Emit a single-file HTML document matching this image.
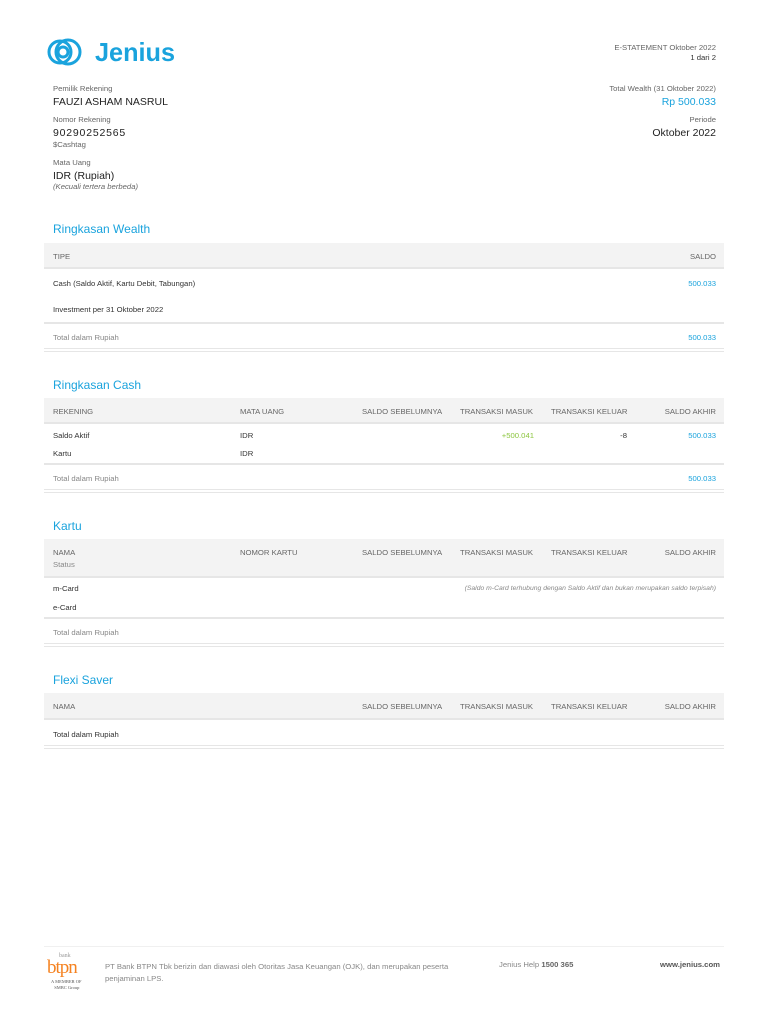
<!DOCTYPE html>
<html><head><meta charset="utf-8"><style>
body{margin:0;width:768px;height:1024px;background:#fff;position:relative;font-family:"Liberation Sans",sans-serif;color:#333;overflow:hidden}
.t{position:absolute;white-space:nowrap;line-height:1;transform:translateY(2px)}
.s{font-size:7.7px;color:#666}
.g{color:#888}
.v{font-size:10.5px;color:#222}
.b{color:#1aa3dd}
.h{font-size:12px;color:#1aa3dd}
.hd{position:absolute;left:44px;width:680px;background:#f3f3f3;border-bottom:2px solid #e6e6e6}
.ln{position:absolute;left:44px;width:680px;height:2px;background:#e6e6e6}
.r{text-align:right}
</style></head><body>
<svg style="position:absolute;left:46px;top:36px" width="135" height="32" viewBox="0 0 135 32">
<g fill="none" stroke="#1aa3dd" stroke-width="3"><circle cx="14" cy="16" r="11"/><circle cx="22" cy="16" r="12"/><circle cx="17" cy="16" r="5"/></g>
<text x="49" y="25" font-family="Liberation Sans,sans-serif" font-size="26" font-weight="bold" fill="#1aa3dd" textLength="80" lengthAdjust="spacingAndGlyphs">Jenius</text>
</svg>
<div class="t s" style="left:53px;top:83px">Pemilik Rekening</div>
<div class="t v" style="left:53px;top:95px">FAUZI ASHAM NASRUL</div>
<div class="t s" style="left:53px;top:114px">Nomor Rekening</div>
<div class="t v" style="left:53px;top:126px;letter-spacing:.8px">90290252565</div>
<div class="t s" style="left:53px;top:139px">$Cashtag</div>
<div class="t s" style="left:53px;top:157px">Mata Uang</div>
<div class="t v" style="left:53px;top:169px">IDR (Rupiah)</div>
<div class="t s" style="left:53px;top:181px;font-style:italic">(Kecuali tertera berbeda)</div>
<div class="t s r" style="right:52px;top:42px">E-STATEMENT Oktober 2022</div>
<div class="t s r" style="right:52px;top:52px;color:#333">1 dari 2</div>
<div class="t s r" style="right:52px;top:83px">Total Wealth (31 Oktober 2022)</div>
<div class="t r b" style="right:52px;top:95px;font-size:10.5px">Rp 500.033</div>
<div class="t s r" style="right:52px;top:114px">Periode</div>
<div class="t v r" style="right:52px;top:126px">Oktober 2022</div>

<div class="t h" style="left:53px;top:221px">Ringkasan Wealth</div>
<div class="hd" style="top:243px;height:24px"></div>
<div class="t s" style="left:53px;top:251px">TIPE</div>
<div class="t s r" style="right:52px;top:251px">SALDO</div>
<div class="t s" style="left:53px;top:278px;color:#333">Cash (Saldo Aktif, Kartu Debit, Tabungan)</div>
<div class="t s r b" style="right:52px;top:278px">500.033</div>
<div class="t s" style="left:53px;top:304px;color:#333">Investment per 31 Oktober 2022</div>
<div class="ln" style="top:322px"></div>
<div class="t s g" style="left:53px;top:332px">Total dalam Rupiah</div>
<div class="t s r b" style="right:52px;top:332px">500.033</div>
<div class="ln" style="top:348px;height:1px"></div><div class="ln" style="top:351px;height:1px"></div>

<div class="t h" style="left:53px;top:377px">Ringkasan Cash</div>
<div class="hd" style="top:398px;height:24px"></div>
<div class="t s" style="left:53px;top:406px">REKENING</div>
<div class="t s" style="left:240px;top:406px">MATA UANG</div>
<div class="t s" style="left:362px;top:406px">SALDO SEBELUMNYA</div>
<div class="t s" style="left:460px;top:406px">TRANSAKSI MASUK</div>
<div class="t s" style="left:551px;top:406px">TRANSAKSI KELUAR</div>
<div class="t s r" style="right:52px;top:406px">SALDO AKHIR</div>
<div class="t s" style="left:53px;top:430px;color:#333">Saldo Aktif</div>
<div class="t s" style="left:240px;top:430px;color:#333">IDR</div>
<div class="t s" style="right:234px;top:430px;color:#8cc63f">+500.041</div>
<div class="t s" style="right:141px;top:430px;color:#333">-8</div>
<div class="t s r b" style="right:52px;top:430px">500.033</div>
<div class="t s" style="left:53px;top:448px;color:#333">Kartu</div>
<div class="t s" style="left:240px;top:448px;color:#333">IDR</div>
<div class="ln" style="top:463px"></div>
<div class="t s g" style="left:53px;top:473px">Total dalam Rupiah</div>
<div class="t s r b" style="right:52px;top:473px">500.033</div>
<div class="ln" style="top:489px;height:1px"></div><div class="ln" style="top:492px;height:1px"></div>

<div class="t h" style="left:53px;top:518px">Kartu</div>
<div class="hd" style="top:539px;height:37px"></div>
<div class="t s" style="left:53px;top:547px">NAMA</div>
<div class="t s g" style="left:53px;top:559px">Status</div>
<div class="t s" style="left:240px;top:547px">NOMOR KARTU</div>
<div class="t s" style="left:362px;top:547px">SALDO SEBELUMNYA</div>
<div class="t s" style="left:460px;top:547px">TRANSAKSI MASUK</div>
<div class="t s" style="left:551px;top:547px">TRANSAKSI KELUAR</div>
<div class="t s r" style="right:52px;top:547px">SALDO AKHIR</div>
<div class="t s" style="left:53px;top:583px;color:#333">m-Card</div>
<div class="t r" style="right:52px;top:584px;font-size:6.8px;font-style:italic;color:#888">(Saldo m-Card terhubung dengan Saldo Aktif dan bukan merupakan saldo terpisah)</div>
<div class="t s" style="left:53px;top:602px;color:#333">e-Card</div>
<div class="ln" style="top:617px"></div>
<div class="t s g" style="left:53px;top:627px">Total dalam Rupiah</div>
<div class="ln" style="top:643px;height:1px"></div><div class="ln" style="top:646px;height:1px"></div>

<div class="t h" style="left:53px;top:672px">Flexi Saver</div>
<div class="hd" style="top:693px;height:25px"></div>
<div class="t s" style="left:53px;top:701px">NAMA</div>
<div class="t s" style="left:362px;top:701px">SALDO SEBELUMNYA</div>
<div class="t s" style="left:460px;top:701px">TRANSAKSI MASUK</div>
<div class="t s" style="left:551px;top:701px">TRANSAKSI KELUAR</div>
<div class="t s r" style="right:52px;top:701px">SALDO AKHIR</div>
<div class="t s" style="left:53px;top:729px;color:#333">Total dalam Rupiah</div>
<div class="ln" style="top:745px;height:1px"></div><div class="ln" style="top:748px;height:1px"></div>

<div class="ln" style="top:946px;height:1px;background:#f0f0f0"></div>
<div class="t" style="left:59px;top:951px;font-size:6px;color:#999;font-family:'Liberation Serif',serif">bank</div>
<div class="t" style="left:47px;top:956px;font-size:19px;color:#f58220;font-family:'Liberation Serif',serif;letter-spacing:-1px">btpn</div>
<div class="t" style="left:51px;top:977px;font-size:4.5px;color:#555;font-family:'Liberation Serif',serif;text-align:center;line-height:1.3">A MEMBER OF<br>&nbsp;SMBC Group</div>
<div class="t" style="left:105px;top:959px;font-size:7.7px;color:#888;line-height:12px">PT Bank BTPN Tbk berizin dan diawasi oleh Otoritas Jasa Keuangan (OJK), dan merupakan peserta<br>penjaminan LPS.</div>
<div class="t" style="left:499px;top:959px;font-size:7.7px;color:#888">Jenius Help <b style="color:#666">1500 365</b></div>
<div class="t r" style="right:48px;top:959px;font-size:7.7px;color:#555;font-weight:bold">www.jenius.com</div>
</body></html>
